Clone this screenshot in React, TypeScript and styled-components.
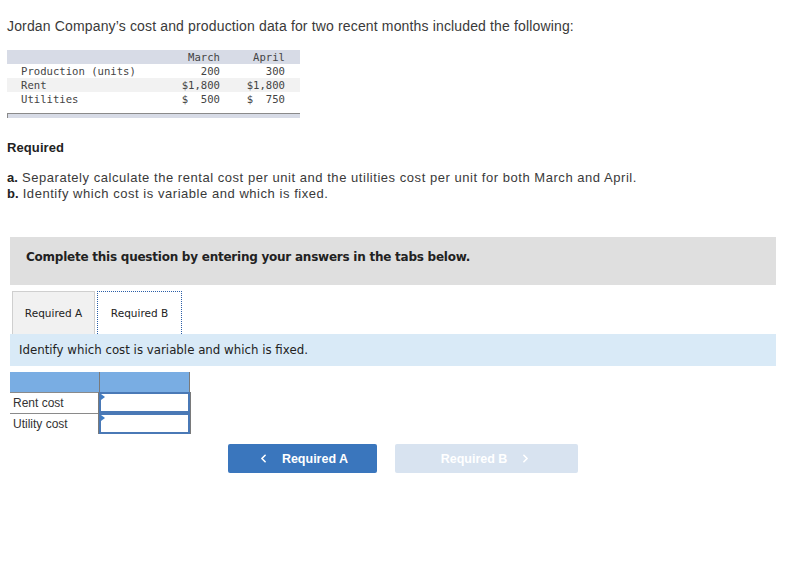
import styled, { createGlobalStyle } from "styled-components";
import { ChevronLeft, ChevronRight } from "lucide-react";

const GlobalStyle = createGlobalStyle`
  body {
    margin: 0;
    background: #fff;
    font-family: "Liberation Sans", Arial, sans-serif;
    color: #333;
  }
`;

interface DataRow {
  label: string;
  march: string;
  april: string;
}

const dataRows: DataRow[] = [
  { label: "Production (units)", march: "200", april: "300" },
  { label: "Rent", march: "$1,800", april: "$1,800" },
  { label: "Utilities", march: "$  500", april: "$  750" },
];

const answerRows = ["Rent cost", "Utility cost"];

const App = () => {
  return (
    <Page>
      <GlobalStyle />
      <Intro>
        Jordan Company’s cost and production data for two recent months
        included the following:
      </Intro>

      <DataTable>
        <DataRowBox shade="head">
          <span />
          <NumCell>March</NumCell>
          <NumCell>April</NumCell>
        </DataRowBox>
        {dataRows.map((row, i) => (
          <DataRowBox key={row.label} shade={i === 1 ? "grey" : "none"}>
            <span>{row.label}</span>
            <NumCell>{row.march}</NumCell>
            <NumCell>{row.april}</NumCell>
          </DataRowBox>
        ))}
        <TableFoot />
      </DataTable>

      <RequiredTitle>Required</RequiredTitle>
      <Instructions>
        <p>
          <b>a.</b> Separately calculate the rental cost per unit and the
          utilities cost per unit for both March and April.
        </p>
        <p>
          <b>b.</b> Identify which cost is variable and which is fixed.
        </p>
      </Instructions>

      <Banner>Complete this question by entering your answers in the tabs below.</Banner>

      <Tabs>
        <Tab>Required A</Tab>
        <Tab active>Required B</Tab>
      </Tabs>
      <TabPrompt>Identify which cost is variable and which is fixed.</TabPrompt>

      <AnswerTable>
        <AnswerHead>
          <div />
          <div />
        </AnswerHead>
        {answerRows.map((label) => (
          <AnswerRow key={label}>
            <AnswerLabel>{label}</AnswerLabel>
            <AnswerInput>
              <Marker />
            </AnswerInput>
          </AnswerRow>
        ))}
      </AnswerTable>

      <NavBar>
        <NavButton>
          <ChevronLeft size={13} strokeWidth={3} />
          Required A
        </NavButton>
        <NavButton disabled wide>
          Required B
          <ChevronRight size={13} strokeWidth={3} />
        </NavButton>
      </NavBar>
    </Page>
  );
};

export default App;

const Page = styled.div`
  padding: 18px 22px 40px 7px;
`;

const Intro = styled.div`
  font-size: 14px;
  line-height: 16px;
  letter-spacing: 0.15px;
  color: #3a3a3a;
`;

const DataTable = styled.div`
  width: 293px;
  margin-top: 16px;
  font-family: "DejaVu Sans Mono", "Liberation Mono", monospace;
  font-size: 10.6px;
  color: #444;
`;

const DataRowBox = styled.div<{ shade: "head" | "grey" | "none" }>`
  display: grid;
  grid-template-columns: 139px 60px 65px;
  padding: 0 15px 0 14px;
  height: 14px;
  line-height: 14px;
  white-space: pre;
  background: ${(p) =>
    p.shade === "head" ? "#d7dbe6" : p.shade === "grey" ? "#f2f2f2" : "#fff"};
`;

const NumCell = styled.span`
  text-align: right;
`;

const TableFoot = styled.div`
  margin-top: 7px;
  height: 4px;
  background: #d7dbe6;
  border-top: 1px solid #8a8a8a;
  border-left: 1px solid #8a8a8a;
`;

const RequiredTitle = styled.div`
  margin-top: 22px;
  font-size: 13px;
  font-weight: bold;
  line-height: 16px;
  letter-spacing: 0.1px;
  color: #222;
`;

const Instructions = styled.div`
  margin-top: 14px;
  font-size: 13px;
  line-height: 16px;
  letter-spacing: 0.54px;
  color: #3a3a3a;
  p {
    margin: 0;
  }
  b {
    color: #222;
    letter-spacing: 0;
  }
`;

const Banner = styled.div`
  margin: 35px 0 0 3px;
  height: 48px;
  box-sizing: border-box;
  padding: 0 0 8px 16px;
  display: flex;
  align-items: center;
  background: #dfdfdf;
  font-family: "DejaVu Sans", Verdana, sans-serif;
  font-size: 12px;
  letter-spacing: -0.24px;
  font-weight: bold;
  color: #222;
`;

const Tabs = styled.div`
  display: flex;
  gap: 2px;
  margin: 6px 0 0 5px;
`;

const Tab = styled.div<{ active?: boolean }>`
  width: ${(p) => (p.active ? "85px" : "83px")};
  height: 43px;
  box-sizing: border-box;
  display: flex;
  align-items: center;
  justify-content: center;
  font-family: "DejaVu Sans", Verdana, sans-serif;
  font-size: 10.5px;
  color: #222;
  background: ${(p) => (p.active ? "#fff" : "#f1f1f1")};
  border: ${(p) => (p.active ? "1px dotted #2b5ea7" : "1px solid #cfcfcf")};
  border-bottom: none;
`;

const TabPrompt = styled.div`
  margin-left: 3px;
  height: 32px;
  padding-left: 9px;
  display: flex;
  align-items: center;
  background: #d9eaf7;
  font-family: "DejaVu Sans", Verdana, sans-serif;
  font-size: 11.8px;
  color: #222;
`;

const AnswerTable = styled.div`
  width: 180px;
  margin: 6px 0 0 3px;
  font-size: 12px;
  color: #333;
`;

const AnswerHead = styled.div`
  display: grid;
  grid-template-columns: 89px 91px;
  height: 20px;
  background: #79ade3;
  div + div {
    border-left: 1px solid #7a7a7a;
    border-right: 1px solid #7a7a7a;
  }
`;

const AnswerRow = styled.div`
  display: grid;
  grid-template-columns: 89px 91px;
  height: 21px;
`;

const AnswerLabel = styled.div`
  display: flex;
  align-items: center;
  padding-left: 3px;
  border-top: 1px solid #8a8a8a;
`;

const AnswerInput = styled.div`
  position: relative;
  box-sizing: border-box;
  border: 2px solid #4a79b6;
  box-shadow: -1px 0 0 #7a7a7a, 1px 0 0 #7a7a7a;
  background: #fff;
`;

const Marker = styled.span`
  position: absolute;
  left: 0;
  top: 0;
  width: 0;
  height: 0;
  border-top: 3px solid transparent;
  border-bottom: 3px solid transparent;
  border-left: 4px solid #3e7cc4;
`;

const NavBar = styled.div`
  display: flex;
  gap: 18px;
  margin: 10px 0 0 221px;
`;

const NavButton = styled.div<{ disabled?: boolean; wide?: boolean }>`
  width: ${(p) => (p.wide ? "183px" : "149px")};
  height: 29px;
  border-radius: 2px;
  display: flex;
  align-items: center;
  justify-content: center;
  gap: 12px;
  font-size: 12.5px;
  font-weight: bold;
  color: #fff;
  background: ${(p) => (p.disabled ? "#d8e3f0" : "#3a76bd")};
`;
